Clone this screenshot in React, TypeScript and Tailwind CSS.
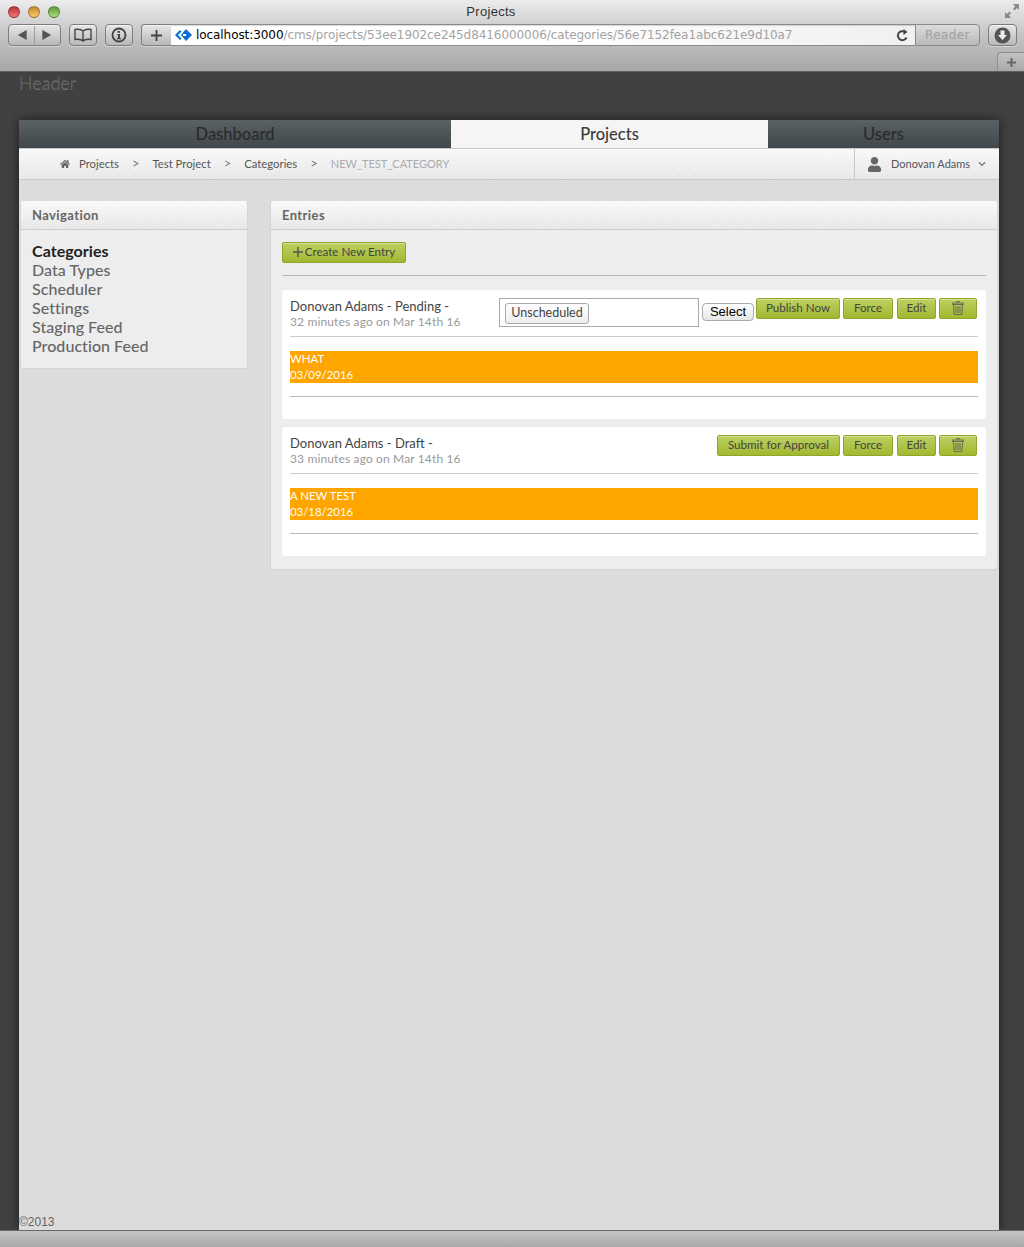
import React from "react";
import { FaHome, FaUser, FaChevronDown } from "react-icons/fa";

const body = "font-['Lato','Open_Sans',sans-serif]";
const hatch =
  "[background-image:repeating-linear-gradient(135deg,rgba(255,255,255,0.3)_0,rgba(255,255,255,0.3)_1px,transparent_1px,transparent_3px),linear-gradient(#f8f8f8,#e5e5e5)]";

function GreenButton({ className = "", children }: { className?: string; children: React.ReactNode }) {
  return (
    <div className={`h-[21px] pb-[2px] flex items-center justify-center rounded-[2px] border border-[#8fa62b] bg-gradient-to-b from-[#bdd161] to-[#a2b82e] text-[11.6px] text-[#444] shadow-[inset_0_1px_0_rgba(255,255,255,0.35)] ${className}`}>
      {children}
    </div>
  );
}

function ToolButton({ className = "", children }: { className?: string; children: React.ReactNode }) {
  return (
    <div className={`h-[22px] flex items-center justify-center rounded-[4px] border border-[#7d7d7d] bg-gradient-to-b from-[#e6e6e6] to-[#b9b9b9] shadow-[inset_0_1px_0_rgba(255,255,255,0.5),0_1px_0_rgba(255,255,255,0.4)] ${className}`}>
      {children}
    </div>
  );
}

function Light({ color }: { color: string }) {
  return <div className={`w-[12px] h-[12px] rounded-full border border-black/30 ${color}`} />;
}

function Trash() {
  return (
    <svg width="12" height="14" viewBox="0 0 12 14" fill="none" stroke="#666b55" strokeWidth="1">
      <path d="M4.500 1.500V.5h3v1M.5 2h11v1.500H.5zM1.500 3.500l.7 10h7.600l.7-10M4 5v7M6 5v7M8 5v7" />
    </svg>
  );
}

function Chrome() {
  return (
    <div className="h-[72px] shrink-0 flex flex-col bg-gradient-to-b from-[#ececec] via-[#c4c4c4] to-[#a6a6a6] border-b border-[#5f5f5f] font-['DejaVu_Sans',sans-serif]">
      <div className="h-[24px] flex items-center pl-[8px] pr-[4px]">
        <div className="flex gap-[8px]">
          <Light color="bg-gradient-to-b from-[#b8343b] to-[#f4747a]" />
          <Light color="bg-gradient-to-b from-[#c88a27] to-[#fbc96b]" />
          <Light color="bg-gradient-to-b from-[#5c9c3b] to-[#abdc7c]" />
        </div>
        <div className="flex-1 text-center text-[13px] text-[#333] pr-[82px] font-['Liberation_Sans',sans-serif] tracking-[0.3px]">Projects</div>
        <svg width="16" height="16" viewBox="0 0 16 16" className="mb-[2px] text-[#8a8a8a]" fill="currentColor">
          <path d="M9 1h6v6l-2-2-2.500 2.500-1.500-1.500L11 3.500zM7 15H1V9l2 2 2.500-2.500 1.500 1.500L5 12.500z" />
        </svg>
      </div>
      <div className="h-[22px] flex items-center pl-[8px] pr-[7px]">
        <ToolButton className="w-[53px]">
          <svg width="52" height="20" viewBox="0 0 52 20">
            <path d="M9 10l9-5v10zM34 5l9 5-9 5z" fill="#555" />
            <path d="M26 1v18" stroke="#999" />
          </svg>
        </ToolButton>
        <ToolButton className="w-[28px] ml-[8px]">
          <svg width="18" height="14" viewBox="0 0 18 14" fill="none" stroke="#444" strokeWidth="1.400">
            <path d="M9 3C7.500 1.500 4 1 1 1.500v10c3-.5 6.500 0 8 1.500 1.500-1.500 5-2 8-1.500v-10C14 1 10.500 1.500 9 3zM9 3v10" />
          </svg>
        </ToolButton>
        <ToolButton className="w-[28px] ml-[8px]">
          <svg width="16" height="16" viewBox="0 0 16 16">
            <circle cx="8" cy="8" r="6.500" fill="none" stroke="#444" strokeWidth="1.800" />
            <path d="M6.500 4h2.500v1.800H6.500zM6.500 7H9v4h1v1.200H6v-1.200h1V8.200h-.5z" fill="#444" />
          </svg>
        </ToolButton>
        <ToolButton className="w-[30px] ml-[8px] rounded-r-none border-r-0">
          <svg width="11" height="11" viewBox="0 0 12 12">
            <path d="M5 0h2v5h5v2H7v5H5V7H0V5h5z" fill="#444" />
          </svg>
        </ToolButton>
        <div className="flex-1 h-[22px] flex items-center bg-gradient-to-r from-white via-white to-[#f0f0f0] border-y border-[#8a8a8a] shadow-[inset_0_1px_1px_rgba(0,0,0,0.15)] pl-[4px]">
          <svg width="17" height="12" viewBox="0 0 17 12" className="shrink-0">
            <path d="M5 1L0 6l5 5 1.500-1.500L3 6l3.500-3.500z" fill="#0a6fd0" />
            <path d="M11 0l6 6-6 6-5-6z" fill="#0a6fd0" />
            <rect x="8" y="5" width="3" height="2" fill="#fff" />
          </svg>
          <div className="ml-[4px] text-[12px] tracking-[-0.07px] text-[#a3a3a3] whitespace-nowrap">
            <span className="text-black">localhost:3000</span>/cms/projects/53ee1902ce245d8416000006/categories/56e7152fea1abc621e9d10a7
          </div>
          <div className="flex-1" />
          <svg width="13" height="13" viewBox="0 0 13 13" fill="none" className="mr-[6px]">
            <path d="M10.500 8.500A4.500 4.500 0 1 1 9 3" stroke="#444" strokeWidth="2" />
            <path d="M7.500 0v6l4-3z" fill="#444" />
          </svg>
        </div>
        <div className="w-[65px] h-[22px] flex items-center justify-center rounded-r-[4px] border border-[#8a8a8a] bg-gradient-to-b from-[#dcdcdc] to-[#b9b9b9] text-[12px] tracking-[0.4px] text-[#a0a0a0]">Reader</div>
        <ToolButton className="w-[29px] ml-[8px]">
          <svg width="17" height="17" viewBox="0 0 17 17">
            <circle cx="8.500" cy="8.500" r="8" fill="#555" />
            <path d="M6.500 3.500h4v4.500h2.500l-4.500 5-4.500-5h2.500z" fill="#eee" />
          </svg>
        </ToolButton>
      </div>
      <div className="flex-1 flex justify-end items-end">
        <div className="w-[27px] h-[19px] flex items-center justify-center rounded-tl-[4px] border-l border-t border-[#8d8d8d] bg-gradient-to-b from-[#c2c2c2] to-[#a9a9a9]">
          <svg width="9" height="9" viewBox="0 0 9 9"><path d="M3.500 0h2v3.500H9v2H5.500V9h-2V5.500H0v-2h3.500z" fill="#666" /></svg>
        </div>
      </div>
    </div>
  );
}

function Tab({ className = "", children, active = false }: { className?: string; children: React.ReactNode; active?: boolean }) {
  return (
    <div className={`h-[28px] pt-[1px] flex items-center justify-center text-[16.5px] font-medium ${active ? "bg-[#f5f5f5] text-[#3c3c3c]" : "bg-gradient-to-b from-[#5a6265] to-[#41474a] text-[#2a2a2a]"} ${className}`}>
      {children}
    </div>
  );
}

function Crumb({ children }: { children: React.ReactNode }) {
  return <span className="text-[11.3px] text-[#555]">{children}</span>;
}

function Sep() {
  return <span className="text-[13px] text-[#777] mx-[13px]">&gt;</span>;
}

function PanelHead({ children }: { children: React.ReactNode }) {
  return (
    <div className={`h-[29px] pt-[1px] flex items-center pl-[11px] rounded-t-[3px] border-b border-[#cdcdcd] text-[13px] font-bold tracking-[0.4px] text-[#666] ${hatch}`}>
      {children}
    </div>
  );
}

function Entry({ who, ago, title, date, actions }: { who: string; ago: string; title: string; date: string; actions: React.ReactNode }) {
  return (
    <div className="h-[129px] px-[8px] rounded-[3px] bg-white">
      <div className="h-[47px] flex justify-between border-b border-[#cccccc]">
        <div className="pt-[8px]">
          <div className="h-[16px] leading-[16px] text-[13px] text-[#444]">{who}</div>
          <div className="h-[16px] leading-[16px] text-[12px] tracking-[0.14px] text-[#999]">{ago}</div>
        </div>
        <div className="flex items-start pt-[8px] pr-[1px] gap-[3px]">{actions}</div>
      </div>
      <div className="mt-[14px] h-[32px] bg-[#ffa500] text-[11.4px] leading-[16px] text-white">
        <div>{title}</div>
        <div>{date}</div>
      </div>
      <div className="mt-[13px] border-b border-[#bbbbbb]" />
    </div>
  );
}

function Common() {
  return (
    <>
      <GreenButton className="w-[50px]">Force</GreenButton>
      <GreenButton className="w-[39px] ml-[1px]">Edit</GreenButton>
      <GreenButton className="w-[38px]"><Trash /></GreenButton>
    </>
  );
}

export default function App() {
  return (
    <div className={`w-full h-[1247px] flex flex-col bg-[#414141] overflow-hidden ${body}`}>
      <Chrome />
      <div className="flex-1 flex flex-col min-h-0 px-[19px] pr-[25px]">
        <div className="h-[48px] shrink-0 text-[18px] leading-[20px] font-light text-[#5c5c5c] [text-shadow:0_1px_0_#777]">Header</div>
        <div className="flex-1 min-h-0 flex flex-col bg-[#dcdcdc] shadow-[0_0_10px_rgba(0,0,0,0.6)]">
          <div className="flex shrink-0">
            <Tab className="w-[432px]">Dashboard</Tab>
            <Tab className="w-[317px]" active>Projects</Tab>
            <Tab className="flex-1">Users</Tab>
          </div>
          <div className={`h-[32px] shrink-0 flex items-center border-y border-[#c8c8c8] ${hatch}`}>
            <div className="flex-1 flex items-center pl-[41px]">
              <FaHome className="text-[10px] text-[#666] mr-[9px]" />
              <Crumb>Projects</Crumb>
              <Sep />
              <Crumb>Test Project</Crumb>
              <Sep />
              <Crumb>Categories</Crumb>
              <Sep />
              <span className="text-[11px] text-[#aaa]">NEW_TEST_CATEGORY</span>
            </div>
            <div className="w-[145px] h-full flex items-center pl-[12px] border-l border-[#c8c8c8]">
              <FaUser className="text-[15px] text-[#666]" />
              <span className="ml-[9px] text-[11px] text-[#555]">Donovan Adams</span>
              <FaChevronDown className="ml-[8px] text-[8px] text-[#777]" />
            </div>
          </div>
          <div className="flex items-start pt-[21px] pl-[1px] pr-[1px] gap-[22px]">
            <div className="w-[228px] shrink-0 rounded-[3px] bg-[#ededed] border-x border-b border-[#d4d4d4]">
              <PanelHead>Navigation</PanelHead>
              <div className="px-[11px] pt-[11px] pb-[13px] text-[16px] leading-[19px] tracking-[0.05px] font-medium text-[#666]">
                <div className="font-bold text-[#222]">Categories</div>
                <div>Data Types</div>
                <div>Scheduler</div>
                <div>Settings</div>
                <div>Staging Feed</div>
                <div>Production Feed</div>
              </div>
            </div>
            <div className="flex-1 min-w-0 rounded-[3px] bg-[#ededed] border-x border-b border-[#d4d4d4]">
              <PanelHead>Entries</PanelHead>
              <div className="px-[11px] pt-[12px] pb-[13px]">
                <GreenButton className="w-[124px]">
                  <svg width="10" height="10" viewBox="0 0 10 10" className="mr-[2px]"><path d="M4.300 0h1.400v4.300H10v1.400H5.700V10H4.300V5.700H0V4.300h4.300z" fill="#555" /></svg>
                  Create New Entry
                </GreenButton>
                <div className="mt-[12px] mb-[14px] border-b border-[#b8b8b8]" />
                <div className="flex flex-col gap-[8px]">
                  <Entry
                    who="Donovan Adams - Pending -"
                    ago="32 minutes ago on Mar 14th 16"
                    title="WHAT"
                    date="03/09/2016"
                    actions={
                      <>
                        <div className="w-[200px] h-[29px] flex items-center pl-[5px] border border-[#aaaaaa] bg-white">
                          <div className="w-[84px] h-[21px] mt-[2px] flex items-center justify-center rounded-[3px] border border-[#aaaaaa] bg-gradient-to-b from-white to-[#eeeeee] text-[12.5px] text-[#444]">Unscheduled</div>
                        </div>
                        <div className="w-[52px] h-[18px] mt-[5px] flex items-center justify-center rounded-[4px] border border-[#aaaaaa] bg-gradient-to-b from-white to-[#e6e6e6] text-[13px] text-black font-['Liberation_Sans',sans-serif]">Select</div>
                        <GreenButton className="w-[84px] -ml-[1px]">Publish Now</GreenButton>
                        <Common />
                      </>
                    }
                  />
                  <Entry
                    who="Donovan Adams - Draft -"
                    ago="33 minutes ago on Mar 14th 16"
                    title="A NEW TEST"
                    date="03/18/2016"
                    actions={
                      <>
                        <GreenButton className="w-[123px]">Submit for Approval</GreenButton>
                        <Common />
                      </>
                    }
                  />
                </div>
              </div>
            </div>
          </div>
          <div className="flex-1" />
          <div className="h-[16px] leading-[16px] text-[12px] text-[#666] font-['Liberation_Sans',sans-serif]">©2013</div>
        </div>
      </div>
      <div className="h-[17px] shrink-0 border-t border-[#6a6a6a] bg-gradient-to-b from-[#c4c4c4] to-[#a8a8a8]" />
    </div>
  );
}
